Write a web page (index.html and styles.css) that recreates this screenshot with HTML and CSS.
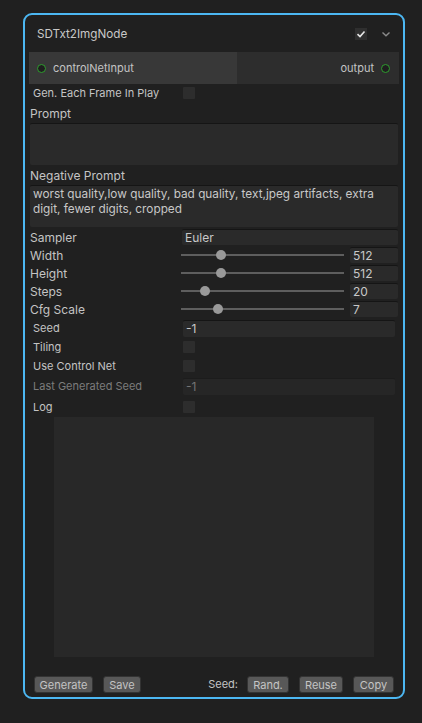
FILE: index.html
```html
<!DOCTYPE html>
<html>
<head>
<meta charset="utf-8">
<link rel="stylesheet" href="styles.css">
</head>
<body>
<div class="node">
  <div class="title-bar">
    <span class="title">SDTxt2ImgNode</span>
    <span class="title-check">
      <svg width="12" height="12" viewBox="0 0 12 12"><path d="M2.5 6.2 L5 8.5 L9.5 3.5" fill="none" stroke="#e6e6e6" stroke-width="1.6"/></svg>
    </span>
    <span class="chevron">
      <svg width="10" height="8" viewBox="0 0 10 8"><path d="M1.5 2.5 L5 5.8 L8.5 2.5" fill="none" stroke="#8a8a8a" stroke-width="1.4"/></svg>
    </span>
  </div>
  <div class="ports">
    <div class="port-in"><span class="port-dot"></span><span>controlNetInput</span></div>
    <div class="port-out"><span>output</span><span class="port-dot"></span></div>
  </div>
  <div class="row row-ind r-gen"><span class="label">Gen. Each Frame In Play</span><span class="check"></span></div>
  <div class="section-label sl-prompt">Prompt</div>
  <div class="textbox"></div>
  <div class="section-label sl-neg">Negative Prompt</div>
  <div class="textbox">worst quality,low quality, bad quality, text,jpeg artifacts, extra digit, fewer digits, cropped</div>
  <div class="params">
    <div class="row"><span class="label">Sampler</span><span class="field wide">Euler</span></div>
    <div class="row"><span class="label">Width</span><span class="slider"><span class="thumb" style="left: 24.5%"></span></span><span class="field num">512</span></div>
    <div class="row"><span class="label">Height</span><span class="slider"><span class="thumb" style="left: 24.5%"></span></span><span class="field num">512</span></div>
    <div class="row"><span class="label">Steps</span><span class="slider"><span class="thumb" style="left: 14.7%"></span></span><span class="field num">20</span></div>
    <div class="row"><span class="label">Cfg Scale</span><span class="slider"><span class="thumb" style="left: 22.7%"></span></span><span class="field num">7</span></div>
  </div>
  <div class="row row-ind r-seed"><span class="label">Seed</span><span class="field seed">-1</span></div>
  <div class="row row-ind r-19"><span class="label">Tiling</span><span class="check"></span></div>
  <div class="row row-ind r-19"><span class="label">Use Control Net</span><span class="check"></span></div>
  <div class="row row-ind r-lgs"><span class="label dim">Last Generated Seed</span><span class="field seed dim">-1</span></div>
  <div class="row row-ind r-19"><span class="label">Log</span><span class="check"></span></div>
  <div class="log"></div>
  <div class="footer">
    <span class="btn b-gen">Generate</span>
    <span class="btn b-save">Save</span>
    <span class="spacer"></span>
    <span class="seed-label">Seed:</span>
    <span class="btn b-rand">Rand.</span>
    <span class="btn b-reuse">Reuse</span>
    <span class="btn b-copy">Copy</span>
  </div>
</div>
</body>
</html>
```
FILE: styles.css
```css
* { box-sizing: border-box; }
html, body { margin: 0; padding: 0; background: #202020; }
body {
  width: 422px;
  height: 723px;
  font-family: Inter, "Noto Sans", sans-serif;
  font-size: 12px;
  color: #c4c4c4;
  overflow: hidden;
}
.node {
  margin: 13px 0 0 23px;
  width: 382px;
  height: 686px;
  border: 2px solid #4cb7f2;
  border-radius: 9px;
  background: #202020;
  display: flex;
  flex-direction: column;
}
.title-bar {
  height: 37px;
  display: flex;
  align-items: center;
  padding: 0 0 0 12px;
}
.title { font-size: 11.7px; color: #c8c8c8; flex: 1; }
.title-check {
  width: 12px; height: 12px;
  background: #2f2f2f;
  display: flex; align-items: center; justify-content: center;
  margin-right: 14px;
}
.chevron { width: 10px; height: 8px; margin-right: 12px; display: flex; }
.ports {
  height: 32px;
  margin: 0 4px;
  display: flex;
  font-size: 11px;
}
.port-in {
  width: 208px;
  background: #383838;
  display: flex; align-items: center;
  padding-left: 8px;
  gap: 7px;
}
.port-out {
  flex: 1;
  background: #2d2d2d;
  display: flex; align-items: center; justify-content: flex-end;
  padding-right: 9px;
  gap: 7px;
}
.port-dot {
  width: 9px; height: 9px;
  border-radius: 50%;
  border: 1.5px solid #2f9d2f;
  background: #1f1f1f;
}
.row {
  height: 18px;
  display: flex;
  align-items: center;
  padding: 0 5px;
}
.row-ind { padding-left: 8px; }
.row-ind .label { font-size: 11px; }
.r-gen { height: 18px; }
.label { width: 149px; flex: none; white-space: nowrap; }
.row:not(.row-ind) .label { width: 152px; }
.dim { color: #7c7c7c; }
.check {
  width: 12px; height: 12px;
  background: #2d2d2d;
  border-radius: 1px;
  margin-left: 1px;
}
.section-label { height: 20px; line-height: 18px; padding: 2px 0 0 5px; }
.sl-prompt { height: 21px; padding-top: 3px; }
.textbox {
  height: 42px;
  margin: 0 5px;
  background: #2a2a2a;
  border-top: 1px solid #151515;
  border-radius: 2px;
  padding: 1px 3px;
  line-height: 15px;
  color: #c8c8c8;
  font-size: 11.8px;
}
.params { margin-top: 1px; }
.field {
  height: 16px;
  background: #2a2a2a;
  border-top: 1px solid #151515;
  border-radius: 2px;
  padding: 0 3px;
  line-height: 15px;
  color: #c8c8c8;
}
.field.wide { flex: 1; }
.field.num { width: 48px; margin-left: 6px; }
.slider {
  width: 163px;
  height: 10px;
  margin-left: -1px;
  position: relative;
}
.slider::before {
  content: "";
  position: absolute;
  left: 0; right: 0; top: 4px;
  height: 2px;
  background: #5e5e5e;
}
.thumb {
  position: absolute;
  top: 0;
  width: 10px; height: 10px;
  margin-left: -5px;
  border-radius: 50%;
  background: #999999;
}
.r-seed { margin-top: 1px; height: 18px; }
.field.seed { width: 212px; height: 17px; margin-left: 1px; }
.field.seed.dim { color: #747474; background: #262626; border-top-color: #1c1c1c; }
.r-19 { height: 19px; }
.r-lgs { height: 22px; }
.log {
  width: 320px;
  height: 240px;
  margin: 1px auto 0;
  background: #282828;
}
.footer {
  flex: 1;
  display: flex;
  align-items: flex-end;
  padding: 0 9px 4px 9px;
  font-size: 11px;
}
.spacer { flex: 1; }
.btn {
  height: 17px;
  background: #585858;
  border-radius: 3px;
  color: #c4c4c4;
  display: flex; align-items: center; justify-content: center;
  border: 1px solid #333;
}
.b-gen { width: 59px; }
.b-save { width: 38px; margin-left: 10px; }
.seed-label { margin-right: 9px; height: 17px; line-height: 17px; }
.b-rand { width: 42px; }
.b-reuse { width: 44px; margin-left: 10px; }
.b-copy { width: 41px; margin-left: 10px; }
```
